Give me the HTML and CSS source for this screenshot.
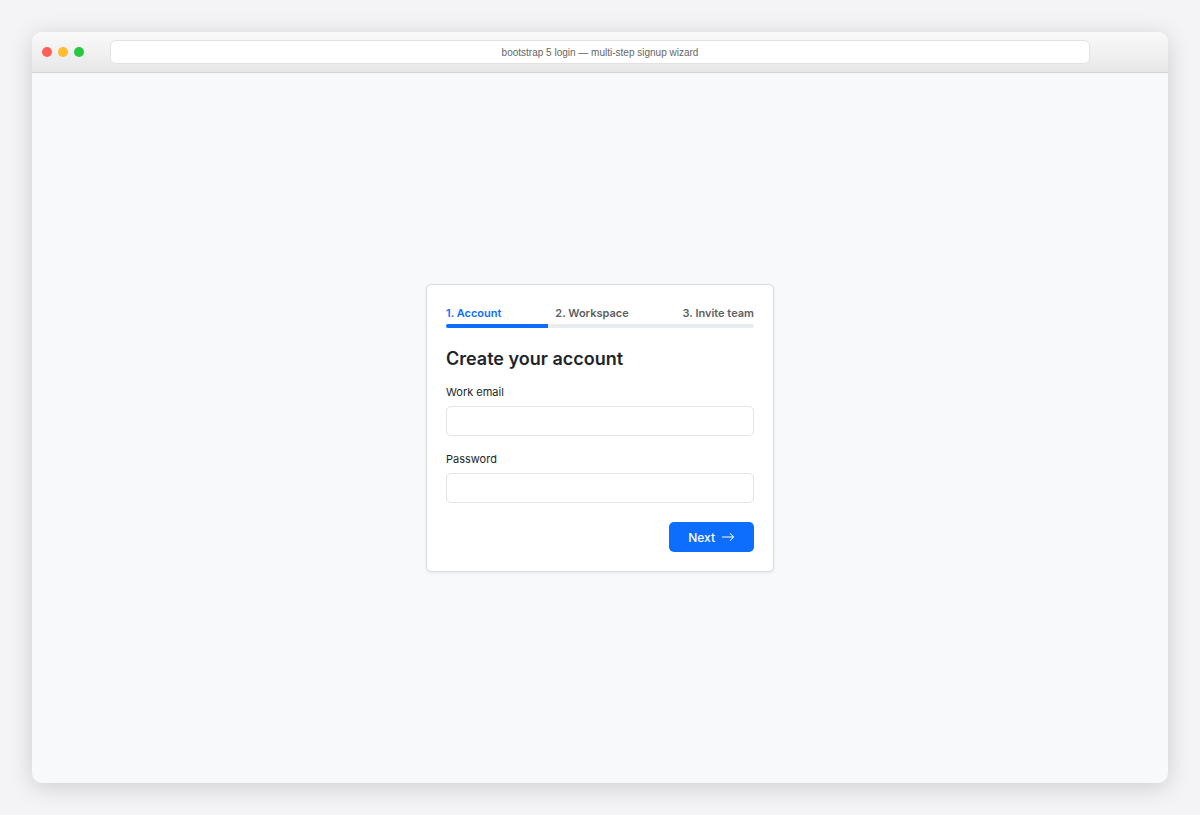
FILE: index.html
```
<!DOCTYPE html>
<html lang="en">
<head>
    <meta charset="UTF-8">
    <meta name="viewport" content="width=device-width, initial-scale=1.0">
    <title>Multi-step signup wizard</title>
    <link rel="stylesheet" href="styles.css">
</head>
<body>
    <div class="window">
        <header class="titlebar">
            <div class="dots">
                <span class="dot dot-red"></span>
                <span class="dot dot-yellow"></span>
                <span class="dot dot-green"></span>
            </div>
            <div class="address">bootstrap 5 login — multi-step signup wizard</div>
        </header>

        <main class="page">
            <form class="card">
                <div class="steps">
                    <span class="step active">1. Account</span>
                    <span class="step">2. Workspace</span>
                    <span class="step">3. Invite team</span>
                </div>
                <div class="progress">
                    <div class="progress-bar" style="width: 33%"></div>
                </div>

                <h1>Create your account</h1>

                <div class="field">
                    <label for="email">Work email</label>
                    <input type="email" id="email">
                </div>
                <div class="field">
                    <label for="password">Password</label>
                    <input type="password" id="password">
                </div>

                <div class="actions">
                    <button type="button">
                        Next
                        <svg class="arrow" viewBox="0 0 16 16" fill="currentColor" aria-hidden="true">
                            <path fill-rule="evenodd" d="M1 8a.5.5 0 0 1 .5-.5h11.793l-3.147-3.146a.5.5 0 0 1 .708-.708l4 4a.5.5 0 0 1 0 .708l-4 4a.5.5 0 0 1-.708-.708L13.293 8.5H1.5A.5.5 0 0 1 1 8z"/>
                        </svg>
                    </button>
                </div>
            </form>
        </main>
    </div>
</body>
</html>
```

FILE: styles.css
```
* {
    box-sizing: border-box;
}
body {
    margin: 0;
    padding: 32px;
    min-height: 100vh;
    display: flex;
    font-family: Inter, "Liberation Sans", sans-serif;
    color: #212529;
    background-color: #f4f4f6;
}

/* Browser window */
.window {
    flex: 1;
    display: flex;
    flex-direction: column;
    border-radius: 10px;
    overflow: hidden;
    background-color: #f8f9fb;
    box-shadow: 0 4px 24px rgba(0,0,0,0.16);
}
.titlebar {
    display: grid;
    grid-template-columns: 68px 1fr 68px;
    align-items: center;
    height: 41px;
    padding: 0 10px;
    background: linear-gradient(#fafafa, #e7e7e7);
    border-bottom: 1px solid #d4d4d4;
}
.dots {
    display: flex;
    gap: 6px;
}
.dot {
    width: 10px;
    height: 10px;
    border-radius: 50%;
}
.dot-red {
    background-color: #ff5f57;
}
.dot-yellow {
    background-color: #febc2e;
}
.dot-green {
    background-color: #28c840;
}
.address {
    height: 24px;
    line-height: 23px;
    border: 1px solid #e2e2e2;
    border-radius: 6px;
    background-color: #fff;
    color: #666;
    font-family: "Liberation Sans", Arial, sans-serif;
    font-size: 10px;
    text-align: center;
}

/* Signup card */
.page {
    flex: 1;
    display: flex;
    align-items: center;
    justify-content: center;
}
.card {
    width: 348px;
    padding: 19px;
    background-color: #fff;
    border: 1px solid #d9dbdd;
    border-radius: 5px;
    box-shadow: 0 1px 3px rgba(0,0,0,0.08);
}
.steps {
    display: flex;
    justify-content: space-between;
    margin-bottom: 2px;
    font-size: 11px;
    font-weight: 600;
    line-height: 18px;
    color: #5c5f63;
}
.step.active {
    color: #0d6efd;
}
.progress {
    height: 4px;
    border-radius: 4px;
    overflow: hidden;
    background-color: #e9ecef;
}
.progress-bar {
    height: 100%;
    background-color: #0d6efd;
}
h1 {
    margin: 20px 0 15px;
    font-size: 18px;
    font-weight: 600;
    line-height: 22px;
}
.field {
    margin-bottom: 16px;
}
label {
    display: block;
    margin-bottom: 7px;
    font-size: 11px;
    line-height: 14px;
}
input {
    display: block;
    width: 100%;
    height: 30px;
    padding: 4px 10px;
    border: 1px solid #e2e4e7;
    border-radius: 5px;
    background-color: #fff;
    font-family: inherit;
    font-size: 13px;
}
.actions {
    display: flex;
    justify-content: flex-end;
    margin-top: 19px;
}
button {
    display: flex;
    align-items: center;
    gap: 6px;
    height: 30px;
    padding: 0 19px;
    border: none;
    border-radius: 5px;
    background-color: #0d6efd;
    color: #fff;
    font-family: inherit;
    font-size: 12px;
    font-weight: 500;
    cursor: pointer;
}
button:hover {
    background-color: #0b5ed7;
}
.arrow {
    width: 14px;
    height: 14px;
}
```
